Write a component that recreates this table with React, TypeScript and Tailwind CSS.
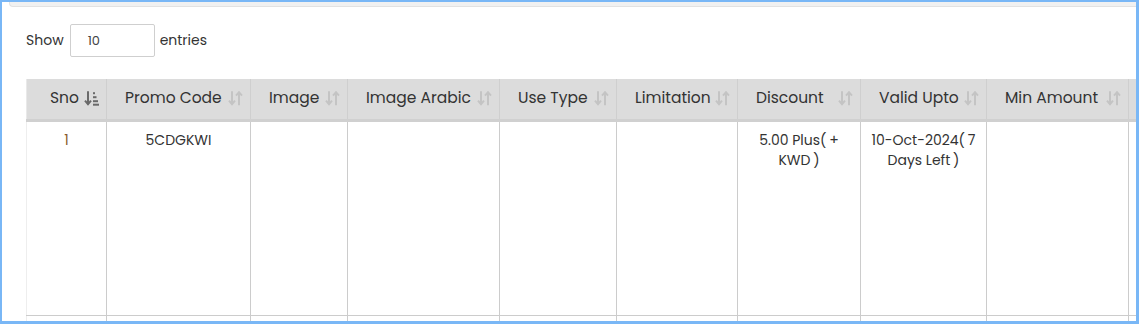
import React from 'react';

type Column = {
    key: string;
    label: string;
    width: number;
    sorted?: boolean;
};

const columns: Column[] = [
    { key: 'sno', label: 'Sno', width: 80, sorted: true },
    { key: 'code', label: 'Promo Code', width: 144 },
    { key: 'image', label: 'Image', width: 97 },
    { key: 'imageAr', label: 'Image Arabic', width: 152 },
    { key: 'useType', label: 'Use Type', width: 117 },
    { key: 'limit', label: 'Limitation', width: 121 },
    { key: 'discount', label: 'Discount', width: 123 },
    { key: 'valid', label: 'Valid Upto', width: 126 },
    { key: 'minAmount', label: 'Min Amount', width: 142 },
    { key: 'status', label: '', width: 120 },
];

const rows: Record<string, string>[] = [
    {
        sno: '1',
        code: '5CDGKWI',
        image: '',
        imageAr: '',
        useType: '',
        limit: '',
        discount: '5.00 Plus(\u2009+ KWD\u2009)',
        valid: '10-Oct-2024(\u20097 Days Left\u2009)',
        minAmount: '',
        status: '',
    },
];

// both-way arrows shown on columns that aren't sorted yet
function SortBoth() {
    return (
        <svg width="15" height="16" viewBox="0 0 15 16" fill="none" stroke="#c4c4c4" strokeWidth="2">
            <path d="M4 1v13" />
            <path d="M1 10.5l3 3.5 3-3.5" />
            <path d="M11 15V2" />
            <path d="M8 5.5l3-3.5 3 3.5" />
        </svg>
    );
}

// active ascending sort: arrow plus stacked bars
function SortAsc() {
    return (
        <svg width="15" height="16" viewBox="0 0 15 16" fill="#6a6a6a" stroke="#6a6a6a">
            <path d="M4 1v13" strokeWidth="2" fill="none" />
            <path d="M1 10.5l3 3.5 3-3.5" strokeWidth="2" fill="none" />
            <rect x="9" y="2" width="2" height="2" stroke="none" />
            <rect x="9" y="6" width="3.5" height="2" stroke="none" />
            <rect x="9" y="10" width="5" height="2" stroke="none" />
            <rect x="9" y="13.5" width="6" height="2" stroke="none" />
        </svg>
    );
}

export default function App() {
    return (
        <div
            className="w-[1139px] h-[324px] overflow-hidden bg-white border-l-2 border-t-2 border-r-[3px] border-b-[3px] border-[#79b7f6]"
            style={{ fontFamily: 'Poppins, "DejaVu Sans", sans-serif' }}
        >
            <div className="ml-[7px] h-[5px] bg-[#f1f1f1] border-b border-[#e2e2e2] border-l rounded-bl-sm" />

            <div className="pl-[24px] pt-[17px]">
                <div className="flex items-center text-[14px] text-[#333]">
                    <span>Show</span>
                    <div className="ml-[6px] w-[85px] h-[33px] border border-[#cfcfcf] rounded-[2px] pl-[17px] flex items-center text-[#444] text-[13px]">
                        10
                    </div>
                    <span className="ml-[5px]">entries</span>
                </div>

                <div className="mt-[22px] overflow-hidden">
                    <table className="table-fixed border-collapse" style={{ width: columns.reduce((s, c) => s + c.width, 0) }}>
                        <colgroup>
                            {columns.map(c => (
                                <col key={c.key} style={{ width: c.width }} />
                            ))}
                        </colgroup>
                        <thead>
                            <tr className="bg-[#dcdcdc] h-[41px]">
                                {columns.map((c, i) => (
                                    <th
                                        key={c.key}
                                        className={`relative text-left font-normal text-[15.5px] text-[#333] whitespace-nowrap pb-[3px] border-b-[3px] border-b-[#d0d0d0] border-x border-x-[#cfcfcf] ${i === 0 ? 'pl-[23px] border-l-[#e9e9e9]' : 'pl-[18px]'}`}
                                    >
                                        {c.label}
                                        {c.label && (
                                            <span className="absolute right-[7px] top-1/2 -translate-y-[55%] flex">
                                                {c.sorted ? <SortAsc /> : <SortBoth />}
                                            </span>
                                        )}
                                    </th>
                                ))}
                            </tr>
                        </thead>
                        <tbody>
                            {rows.map((r, ri) => (
                                <tr key={ri} className="h-[195px]">
                                    {columns.map((c, i) => (
                                        <td
                                            key={c.key}
                                            className={`align-top text-center text-[14px] leading-[20px] pt-[8px] px-[6px] border-b border-b-[#cccccc] border-x border-x-[#cccccc] ${i === 0 ? 'text-[#8a5a2b] border-l-[#eeeeee]' : 'text-[#333]'}`}
                                        >
                                            {r[c.key]}
                                        </td>
                                    ))}
                                </tr>
                            ))}
                            <tr className="h-[20px]">
                                {columns.map((c, i) => (
                                    <td key={c.key} className={`border-x ${i === 0 ? 'border-l-[#eeeeee] border-r-[#cccccc]' : 'border-[#cccccc]'}`} />
                                ))}
                            </tr>
                        </tbody>
                    </table>
                </div>
            </div>
        </div>
    );
}
